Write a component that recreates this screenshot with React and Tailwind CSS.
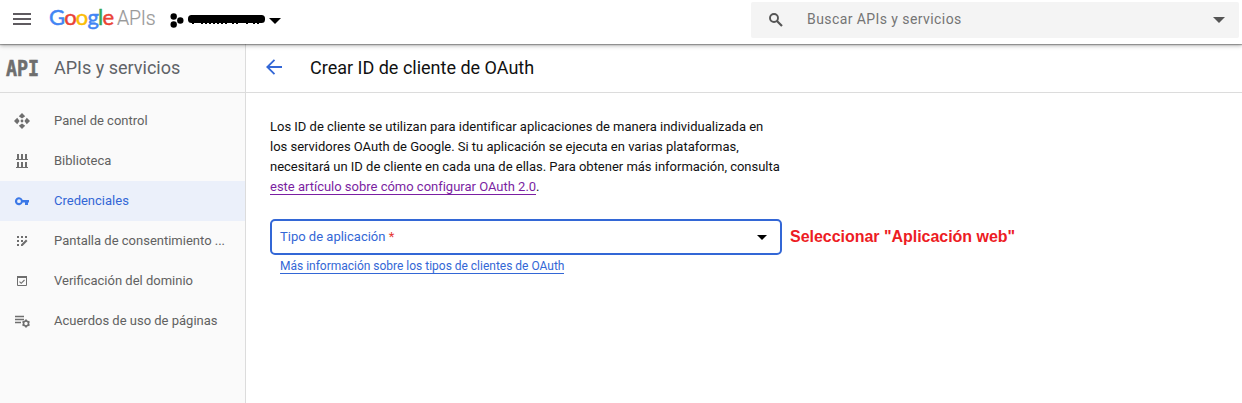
import React from "react";

const MenuIcon = () => (
  <svg className="ml-[13px] h-[12px] w-[18px] shrink-0" viewBox="0 0 18 12" fill="#5f5b60">
    <path d="M0 0h18v2H0zM0 5h18v2H0zM0 10h18v2H0z" />
  </svg>
);

const Caret = ({ className }) => (
  <svg className={className} viewBox="0 0 10 5" preserveAspectRatio="none" fill="currentColor">
    <path d="M0 0h10L5 5z" />
  </svg>
);

const PanelIcon = () => (
  <svg className="h-4 w-4" viewBox="0 0 16 16" fill="currentColor">
    <path d="M8 0l3.200 3.200L8 5.600 4.800 3.200zM8 16l3.200-3.200L8 10.400l-3.200 2.400zM0 8l3.200-3.200L5.600 8l-2.400 3.200zM16 8l-3.200-3.200L10.400 8l2.400 3.200z" />
    <circle cx="8" cy="8" r="1.400" />
  </svg>
);

const LibraryIcon = () => (
  <svg className="h-4 w-4" viewBox="0 0 16 16" fill="currentColor">
    <path d="M3 1h2v5H3zM7 1h2v5H7zM11 1h2v5h-2zM2 6h12v1H2zM3 9h2v5H3zM7 9h2v5H7zM11 9h2v5h-2zM2 14h12v1H2z" />
  </svg>
);

const KeyIcon = () => (
  <svg className="h-4 w-4" viewBox="0 0 16 16" fill="#3b78e7">
    <path fillRule="evenodd" d="M8.700 7A4 4 0 1 0 8.700 9.500H11V12h3V9.500h1V7zM5 6.300a1.900 1.900 0 1 1 0 3.800 1.900 1.900 0 0 1 0-3.800z" />
  </svg>
);

const ConsentIcon = () => (
  <svg className="h-4 w-4" viewBox="0 0 16 16" fill="currentColor">
    <path d="M3 3h2v2H3zM7 3h2v2H7zM11 3h2v2h-2zM3 7h2v2H3zM7 7h2v2H7zM3 11h2v2H3zM7 11.500l5-5 1.500 1.500-5 5H7z" />
  </svg>
);

const DomainIcon = () => (
  <svg className="h-4 w-4" viewBox="0 0 16 16" fill="none" stroke="currentColor">
    <path d="M3.500 4v8.500h9V4z" />
    <path d="M3 4h10" strokeWidth="2" />
    <path d="M5.500 8.600l1.700 1.700 3.300-3.300" strokeWidth="1.100" />
  </svg>
);

const AgreementIcon = () => (
  <svg className="h-4 w-4" viewBox="0 0 16 16" fill="none" stroke="currentColor">
    <path d="M1 3.500h9M1 6.500h9M1 9.500h6" strokeWidth="1.400" />
    <circle cx="12" cy="10.500" r="2.500" strokeWidth="1.600" />
    <path d="M12 6.500v1.500M12 13v1.500M8.500 8.500l1.300.7M14.200 11.800l1.300.7M8.500 12.500l1.300-.7M14.200 9.200l1.300-.7" strokeWidth="1.800" />
  </svg>
);

const items = [
  { label: "Panel de control", Icon: PanelIcon },
  { label: "Biblioteca", Icon: LibraryIcon },
  { label: "Credenciales", Icon: KeyIcon, active: true },
  { label: "Pantalla de consentimiento ...", Icon: ConsentIcon },
  { label: "Verificación del dominio", Icon: DomainIcon },
  { label: "Acuerdos de uso de páginas", Icon: AgreementIcon },
];

const TopBar = () => (
  <header className="relative z-10 flex h-[44px] shrink-0 items-start bg-white shadow-[0_1px_1px_rgba(0,0,0,0.3),0_2px_4px_rgba(0,0,0,0.25)]">
    <div className="flex h-[38px] items-center">
      <MenuIcon />
      <div className="-mt-[3px] ml-[18px] flex w-[107px] items-baseline whitespace-nowrap">
        <span className="w-[68px] font-[Lato] text-[22px] leading-7 tracking-[-0.8px] [-webkit-text-stroke:0.5px_currentColor]">
          <span className="text-[#4285f4] [-webkit-text-stroke:0.5px_#4285f4]">G</span>
          <span className="text-[#ea4335] [-webkit-text-stroke:0.5px_#ea4335]">o</span>
          <span className="text-[#fbbc05] [-webkit-text-stroke:0.5px_#fbbc05]">o</span>
          <span className="text-[#4285f4] [-webkit-text-stroke:0.5px_#4285f4]">g</span>
          <span className="text-[#34a853] [-webkit-text-stroke:0.5px_#34a853]">l</span>
          <span className="text-[#ea4335] [-webkit-text-stroke:0.5px_#ea4335]">e</span>
        </span>
        <span className="text-[19.500px] font-light leading-7 tracking-[-0.2px] text-[#999] [-webkit-text-stroke:0.2px_#999]">APIs</span>
      </div>
      <svg className="ml-[14px] mt-[2px] h-[15px] w-[14px]" viewBox="0 0 14 15">
        <circle cx="3.700" cy="3.500" r="3.200" />
        <circle cx="10.300" cy="7.500" r="3.200" />
        <circle cx="3.700" cy="11.500" r="3.200" />
      </svg>
      <svg className="ml-[4px] h-[10px] w-[78px]" viewBox="0 0 78 10">
        <rect x="0" y="1" width="77" height="8" rx="3.500" />
        <path d="M4 9.500h2M13 9.500h28M44 9.500h6M58 9.500h3M65 9.500h7" stroke="#000" strokeDasharray="2 2" />
      </svg>
      <Caret className="ml-[3px] mt-[3px] h-[6px] w-[12px] text-black" />
    </div>
    <div className="ml-auto mr-[3px] mt-[2px] flex h-[36px] w-[488px] items-center rounded-[2px] bg-[#f4f4f4] pl-[18px] pr-[14px]">
      <svg className="h-[14px] w-[14px]" viewBox="0 0 14 14" fill="none" stroke="#555">
        <circle cx="5" cy="5" r="4" strokeWidth="1.900" />
        <path d="M8 8l5 5" strokeWidth="2.200" />
      </svg>
      <span className="-mt-[2px] ml-[24px] text-[14px] leading-5 tracking-[0.42px] text-[#757575]">Buscar APIs y servicios</span>
      <Caret className="ml-auto h-[6px] w-[12px] text-[#555]" />
    </div>
  </header>
);

const Sidebar = () => (
  <aside className="flex w-[246px] shrink-0 flex-col border-r border-[#dcdcdc] bg-[#fafafa]">
    <div className="flex h-[49px] items-center border-b border-[#dcdcdc]">
      <span className="ml-[6px] mt-px w-[48px] origin-left scale-x-[0.83] font-['DejaVu_Sans_Mono'] text-[22px] font-bold leading-6 text-[#6e6e6e] [-webkit-text-stroke:0.6px_#6e6e6e]">API</span>
      <span className="text-[18px] leading-6 text-[#5f6368]">APIs y servicios</span>
    </div>
    <nav className="pt-2">
      {items.map(({ label, Icon, active }) => (
        <a
          key={label}
          className={`flex h-10 items-center gap-6 pl-[14px] text-[13px] ${active ? "bg-[#ebf0fa]" : ""}`}
        >
          <span className="text-[#6e6e6e]"><Icon /></span>
          <span className={`whitespace-nowrap ${active ? "text-[#3367d6]" : "text-[#616161]"}`}>{label}</span>
        </a>
      ))}
    </nav>
  </aside>
);

const Main = () => (
  <main className="min-w-0 flex-1">
    <div className="flex h-[49px] items-center border-b border-[#dcdcdc] pl-5">
      <svg className="-mt-[2px] h-4 w-4" viewBox="0 0 16 16" fill="none" stroke="#3367d6" strokeWidth="1.800">
        <path d="M16 8H1.500M8.500 .8L1.300 8l7.200 7.200" />
      </svg>
      <h1 className="ml-[28px] text-[18px] leading-6 text-[#111]">Crear ID de cliente de OAuth</h1>
    </div>
    <div className="pl-6 pt-6">
      <p className="whitespace-nowrap text-[13px] leading-5 tracking-[-0.01px] text-[#111]">
        Los ID de cliente se utilizan para identificar aplicaciones de manera individualizada en<br />
        los servidores OAuth de Google. Si tu aplicación se ejecuta en varias plataformas,<br />
        necesitará un ID de cliente en cada una de ellas. Para obtener más información, consulta<br />
        <a className="border-b border-[#7b1fa2] text-[#7b1fa2]">este artículo sobre cómo configurar OAuth 2.0</a>.
      </p>
      <div className="mt-[22px] flex items-center">
        <div className="flex h-[36px] w-[512px] items-center rounded-[5px] border-2 border-[#3367d6] pl-2 pr-[13px] text-[13px] text-[#3367d6]">
          <span>Tipo de aplicación <span className="text-[#e53935]">*</span></span>
          <Caret className="ml-auto h-[5px] w-[10px] text-black" />
        </div>
        <strong className="ml-2 whitespace-nowrap font-['Liberation_Sans'] text-[16px] font-bold tracking-[-0.03px] text-[#ed1c24]">Seleccionar "Aplicación web"</strong>
      </div>
      <div className="pl-[10px] pt-[3px] text-[12px] leading-4">
        <a className="border-b border-[#3367d6] tracking-[-0.01px] text-[#3367d6]">Más información sobre los tipos de clientes de OAuth</a>
      </div>
    </div>
  </main>
);

export default function App() {
  return (
    <div className="flex h-[403px] w-[1242px] flex-col overflow-hidden bg-white font-[Roboto,sans-serif]">
      <TopBar />
      <div className="flex min-h-0 flex-1">
        <Sidebar />
        <Main />
      </div>
    </div>
  );
}
